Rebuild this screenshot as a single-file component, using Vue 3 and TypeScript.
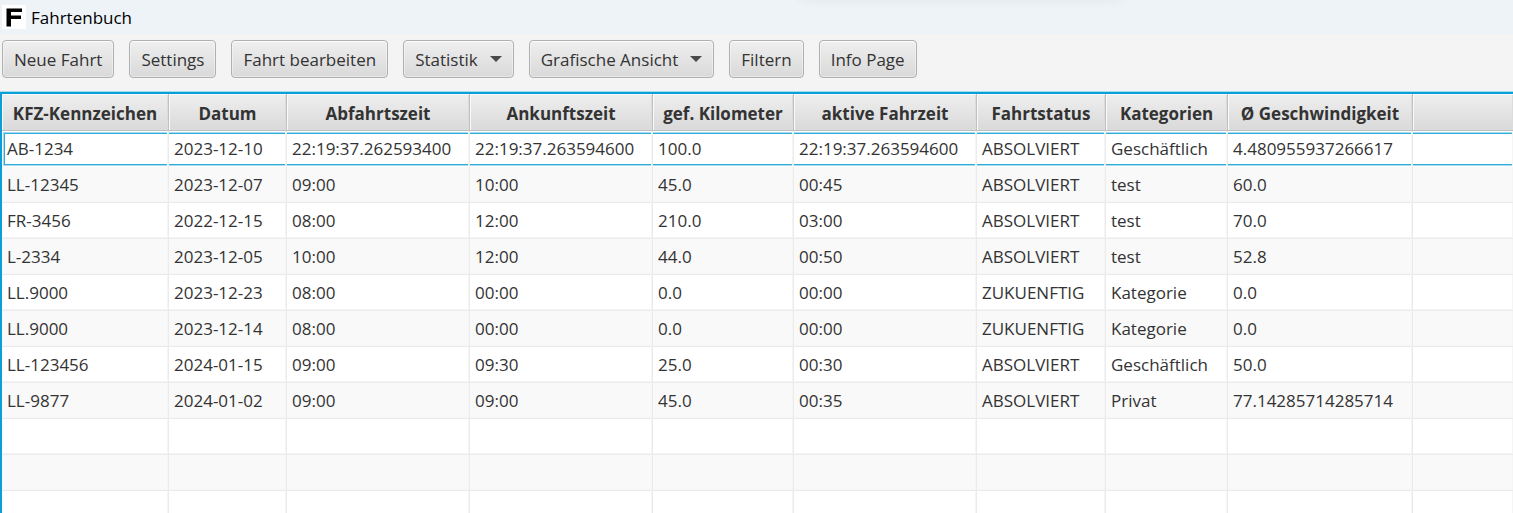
<script setup lang="ts">
interface ToolButton {
  label: string
  menu?: boolean
}

const buttons: ToolButton[] = [
  { label: 'Neue Fahrt' },
  { label: 'Settings' },
  { label: 'Fahrt bearbeiten' },
  { label: 'Statistik', menu: true },
  { label: 'Grafische Ansicht', menu: true },
  { label: 'Filtern' },
  { label: 'Info Page' },
]

const columns: { title: string; width: number }[] = [
  { title: 'KFZ-Kennzeichen', width: 167 },
  { title: 'Datum', width: 118 },
  { title: 'Abfahrtszeit', width: 183 },
  { title: 'Ankunftszeit', width: 183 },
  { title: 'gef. Kilometer', width: 141 },
  { title: 'aktive Fahrzeit', width: 183 },
  { title: 'Fahrtstatus', width: 129 },
  { title: 'Kategorien', width: 122 },
  { title: 'Ø Geschwindigkeit', width: 185 },
]

const rows: string[][] = [
  ['AB-1234', '2023-12-10', '22:19:37.262593400', '22:19:37.263594600', '100.0', '22:19:37.263594600', 'ABSOLVIERT', 'Geschäftlich', '4.480955937266617'],
  ['LL-12345', '2023-12-07', '09:00', '10:00', '45.0', '00:45', 'ABSOLVIERT', 'test', '60.0'],
  ['FR-3456', '2022-12-15', '08:00', '12:00', '210.0', '03:00', 'ABSOLVIERT', 'test', '70.0'],
  ['L-2334', '2023-12-05', '10:00', '12:00', '44.0', '00:50', 'ABSOLVIERT', 'test', '52.8'],
  ['LL.9000', '2023-12-23', '08:00', '00:00', '0.0', '00:00', 'ZUKUENFTIG', 'Kategorie', '0.0'],
  ['LL.9000', '2023-12-14', '08:00', '00:00', '0.0', '00:00', 'ZUKUENFTIG', 'Kategorie', '0.0'],
  ['LL-123456', '2024-01-15', '09:00', '09:30', '25.0', '00:30', 'ABSOLVIERT', 'Geschäftlich', '50.0'],
  ['LL-9877', '2024-01-02', '09:00', '09:00', '45.0', '00:35', 'ABSOLVIERT', 'Privat', '77.14285714285714'],
]

const emptyRows = 3
</script>

<template>
  <div class="window">
    <header class="titlebar">
      <svg class="logo" viewBox="0 0 24 24" aria-hidden="true">
        <rect width="24" height="24" fill="#fff" />
        <path d="M4.500 3.500H20V7H9V10.500H19V14H9V21.500H4.500Z" fill="#000" />
      </svg>
      <h1 class="title">Fahrtenbuch</h1>
      <div class="shade"></div>
    </header>

    <nav class="toolbar">
      <button
        v-for="b in buttons"
        :key="b.label"
        type="button"
        class="btn"
        :aria-haspopup="b.menu ? 'menu' : undefined"
      >
        {{ b.label }}
        <svg v-if="b.menu" class="arrow" viewBox="0 0 12 6" aria-hidden="true">
          <path d="M0 0H12L6 6Z" fill="#4a4a4a" />
        </svg>
      </button>
    </nav>

    <main class="table-view">
      <table>
        <colgroup>
          <col v-for="c in columns" :key="c.title" :style="{ width: c.width + 'px' }" />
          <col />
        </colgroup>
        <thead>
          <tr>
            <th v-for="c in columns" :key="c.title" scope="col">{{ c.title }}</th>
            <td class="filler"></td>
          </tr>
        </thead>
        <tbody>
          <tr v-for="(row, i) in rows" :key="i" :class="{ focused: i === 0 }">
            <td v-for="(cell, j) in row" :key="j">{{ cell }}</td>
            <td></td>
          </tr>
          <tr v-for="n in emptyRows" :key="'empty' + n">
            <td v-for="c in columns" :key="c.title"></td>
            <td></td>
          </tr>
        </tbody>
      </table>
    </main>
  </div>
</template>

<style>
body {
  margin: 0;
  background: #f4f4f4;
}
</style>

<style scoped>
.window {
  display: flex;
  flex-direction: column;
  height: 100vh;
  overflow: hidden;
  background: #f4f4f4;
  color: #333;
  font-family: 'Open Sans', 'Noto Sans', sans-serif;
  font-size: 17px;
}

.titlebar {
  position: relative;
  display: flex;
  flex: none;
  align-items: center;
  gap: 5px;
  height: 34px;
  padding-left: 2px;
  background: #eef3f8;
  overflow: hidden;
}

.logo {
  width: 24px;
  height: 24px;
}

.title {
  margin: 0;
  padding-top: 2px;
  color: #000;
  font-size: 17px;
  font-weight: 400;
  line-height: 24px;
}

.shade {
  position: absolute;
  top: -10px;
  left: 53%;
  width: 21%;
  height: 8px;
  box-shadow: 0 0 12px 2px rgba(0, 0, 0, 0.06);
}

.toolbar {
  display: flex;
  flex: none;
  gap: 15px;
  padding: 6px 2px 14px;
}

.btn {
  display: flex;
  align-items: center;
  gap: 12px;
  height: 38px;
  padding: 0 11px;
  border: 1px solid #b0b0b0;
  border-radius: 4px;
  background: linear-gradient(#efefef, #d9d9d9);
  box-shadow: inset 0 0 0 1px rgba(255, 255, 255, 0.4), inset 0 1px 0 #fafafa;
  color: #333;
  font: inherit;
  white-space: nowrap;
}

.arrow {
  width: 12px;
  height: 6px;
}

.table-view {
  flex: 1;
  min-height: 0;
  overflow: hidden;
  border-top: 2px solid #0a9fd6;
  border-left: 2px solid #0a9fd6;
  background: #fff;
  box-shadow: 0 -1px 0 #a5dcf0;
}

table {
  width: 100%;
  table-layout: fixed;
  border-collapse: separate;
  border-spacing: 0;
}

th,
td {
  box-sizing: border-box;
  height: 36px;
  padding: 0;
  white-space: nowrap;
}

th,
.filler {
  height: 37px;
  padding-top: 2px;
  border-right: 1px solid #c0c0c0;
  border-bottom: 1px solid #c0c0c0;
  background: linear-gradient(#efefef, #d9d9d9);
  box-shadow: inset 1px 1px 0 #fafafa, inset -1px -1px 0 #dcdcdc;
  font-weight: 700;
  text-align: center;
}

tbody td {
  padding-left: 5px;
  border-right: 1px solid #ebebeb;
  border-bottom: 1px solid #ebebeb;
  background: #fff;
  box-shadow: inset -1px -1px 0 #f5f5f5;
}

tbody tr:nth-child(even) td {
  background: #f9f9f9;
}

tr td:last-child {
  border-right: 0;
}

.focused td {
  border-bottom-color: #fff;
  background:
    linear-gradient(#a5dcf0, #a5dcf0) 0 1px / 100% 1px no-repeat,
    linear-gradient(#2fabd8, #2fabd8) 0 2px / 100% 1px no-repeat,
    linear-gradient(#2fabd8, #2fabd8) 0 33px / 100% 1px no-repeat,
    linear-gradient(#a5dcf0, #a5dcf0) 0 34px / 100% 1px no-repeat,
    #fff;
  box-shadow: inset -1px 0 0 #f5f5f5;
}

.focused td:first-child {
  background:
    linear-gradient(#2fabd8, #2fabd8) 2px 2px / 1px 32px no-repeat,
    linear-gradient(#a5dcf0, #a5dcf0) 1px 1px / 1px 34px no-repeat,
    linear-gradient(#a5dcf0, #a5dcf0) 1px 1px / 100% 1px no-repeat,
    linear-gradient(#2fabd8, #2fabd8) 2px 2px / 100% 1px no-repeat,
    linear-gradient(#2fabd8, #2fabd8) 2px 33px / 100% 1px no-repeat,
    linear-gradient(#a5dcf0, #a5dcf0) 1px 34px / 100% 1px no-repeat,
    #fff;
}
</style>
